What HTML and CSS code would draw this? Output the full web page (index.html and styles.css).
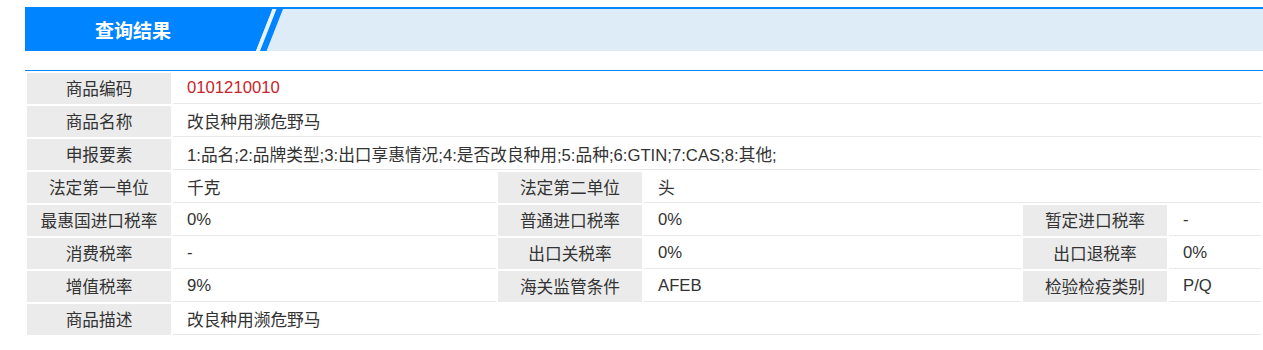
FILE: index.html
```html
<!DOCTYPE html>
<html lang="zh-CN">
<head>
<meta charset="utf-8">
<title>查询结果</title>
<link rel="stylesheet" href="styles.css">
</head>
<body>
<div class="page">
  <div class="header">
    <div class="title">查询结果</div>
    <svg class="slant" width="30" height="42" viewBox="0 0 30 42">
      <polygon points="0,0 17.5,0 1,42 0,42" fill="#0084ff"/>
      <polygon points="17.5,0 21.5,0 5,42 1,42" fill="#e9f3fb"/>
      <polygon points="21.5,0 28,0 11.5,42 5,42" fill="#0084ff"/>
    </svg>
  </div>
  <table class="result">
    <colgroup>
      <col class="c-label"><col class="c-v1"><col class="c-label"><col class="c-v2"><col class="c-label"><col class="c-v3">
    </colgroup>
    <tbody>
      <tr><td class="label">商品编码</td><td class="value code" colspan="5">0101210010</td></tr>
      <tr><td class="label">商品名称</td><td class="value" colspan="5">改良种用濒危野马</td></tr>
      <tr><td class="label">申报要素</td><td class="value" colspan="5">1:品名;2:品牌类型;3:出口享惠情况;4:是否改良种用;5:品种;6:GTIN;7:CAS;8:其他;</td></tr>
      <tr><td class="label">法定第一单位</td><td class="value">千克</td><td class="label">法定第二单位</td><td class="value" colspan="3">头</td></tr>
      <tr><td class="label">最惠国进口税率</td><td class="value">0%</td><td class="label">普通进口税率</td><td class="value">0%</td><td class="label">暂定进口税率</td><td class="value">-</td></tr>
      <tr><td class="label">消费税率</td><td class="value">-</td><td class="label">出口关税率</td><td class="value">0%</td><td class="label">出口退税率</td><td class="value">0%</td></tr>
      <tr><td class="label">增值税率</td><td class="value">9%</td><td class="label">海关监管条件</td><td class="value">AFEB</td><td class="label">检验检疫类别</td><td class="value">P/Q</td></tr>
      <tr><td class="label">商品描述</td><td class="value" colspan="5">改良种用濒危野马</td></tr>
    </tbody>
  </table>
</div>
</body>
</html>
```
FILE: styles.css
```css
html, body {
  margin: 0;
  padding: 0;
  background: #ffffff;
  overflow: hidden;
}
body {
  font-family: "Liberation Sans", "Noto Sans CJK SC", sans-serif;
  color: #333333;
}
.page {
  padding: 7px 0 0 25px;
}
.header {
  display: flex;
  height: 44px;
  box-sizing: border-box;
  border-top: 2px solid #0084ff;
  background: #ddecf7;
}
.title {
  width: 230px;
  box-sizing: border-box;
  padding-left: 70px;
  background: #0084ff;
  color: #ffffff;
  font-family: "Noto Sans CJK SC", sans-serif;
  font-weight: bold;
  font-size: 19px;
  line-height: 42px;
}
.slant {
  display: block;
  flex: none;
}
.result {
  margin-top: 19px;
  width: 1238px;
  table-layout: fixed;
  border-collapse: separate;
  border-spacing: 2px;
  border-top: 1px solid #0a86f5;
  font-size: 16.7px;
}
.c-label { width: 144px; }
.c-v1 { width: 323px; }
.c-v2 { width: 377px; }
.c-v3 { width: 92px; }
.result td {
  height: 31px;
  box-sizing: border-box;
  padding: 0;
  white-space: nowrap;
  vertical-align: middle;
}
.label {
  background: #ebebeb;
  border-bottom: 1px solid #ebebeb;
  text-align: center;
}
.value {
  padding-left: 14px !important;
  border-bottom: 1px solid #e8e8e8;
  text-align: left;
}
.code {
  color: #c8242b;
}
```
